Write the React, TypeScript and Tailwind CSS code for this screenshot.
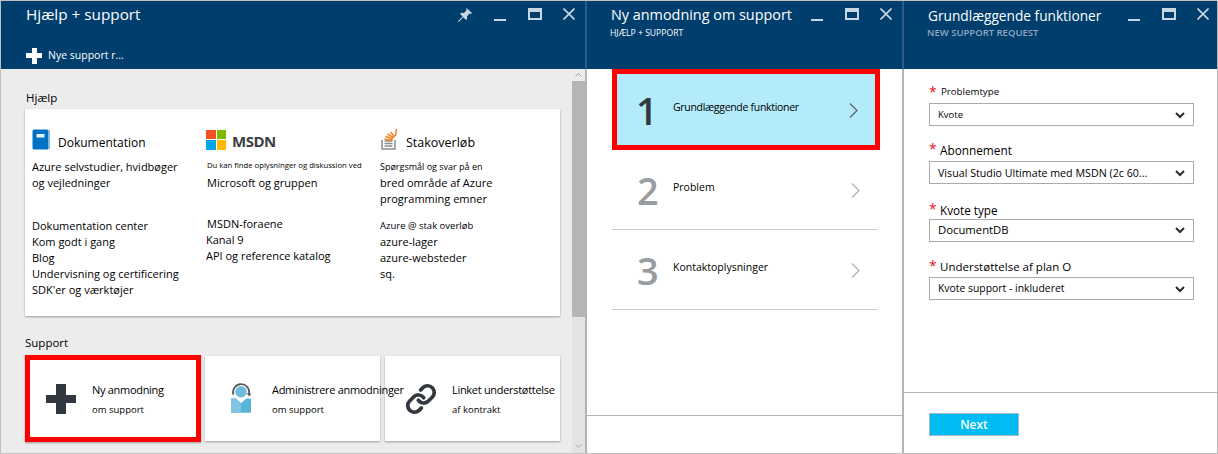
import type { ReactNode } from 'react';

function PinIcon() {
    return (
        <svg width="14" height="14" viewBox="0 0 14 14" className="text-[#c9d6e3]">
            <path fill="currentColor" d="M8.500 0L14 5l-1.300 1-1.100-.4-2.600 2.600.2 2.600L8 12 5.300 9.300.8 14 0 13.200l4.700-4.700-2.600-2.600 1.200-1.200 2.600.2 2.700-2.600-.4-1.100z" />
        </svg>
    );
}

function WindowButtons({ pin }: { pin?: boolean }) {
    return (
        <div className="flex shrink-0 items-start text-[#c9d6e3]">
            {pin && (
                <div className="mr-[22px] mt-[7px]">
                    <PinIcon />
                </div>
            )}
            <div className="mt-[18px] h-[2px] w-[12px] bg-[#c9d6e3]" />
            <div className="ml-[22px] mt-[7px] h-[12px] w-[14px] border-[2px] border-t-[4px] border-[#c9d6e3]" />
            <svg width="12" height="12" viewBox="0 0 12 12" className="ml-[21px] mt-[7px]">
                <path d="M.5.500l11 11M11.500.500l-11 11" stroke="currentColor" strokeWidth="1.600" fill="none" />
            </svg>
        </div>
    );
}

function BookIcon() {
    return (
        <svg width="19" height="21" viewBox="0 0 19 21">
            <rect x="0.500" y="0.500" width="16" height="20" rx="1.500" fill="#0072c6" />
            <rect x="16" y="1" width="2" height="19" fill="#7fb9e3" />
            <rect x="4.500" y="5" width="8" height="3.500" fill="#e6f2fb" />
        </svg>
    );
}

function MsLogo() {
    return (
        <div className="grid h-[20px] w-[20px] grid-cols-2 gap-px">
            <div className="bg-[#f25022]" />
            <div className="bg-[#7fba00]" />
            <div className="bg-[#00a4ef]" />
            <div className="bg-[#ffb900]" />
        </div>
    );
}

function StackIcon() {
    return (
        <svg width="17" height="21" viewBox="0 0 17 21">
            <path d="M1 11v9h13v-9" fill="none" stroke="#8c8c8c" strokeWidth="1.500" />
            <path d="M3.500 12h8M3.500 14.500h8M3.500 17h8" stroke="#8c8c8c" strokeWidth="1.500" />
            <path d="M3.500 10.300l8 .7M4.500 7.500l7.500 2.300M6.500 5l6.300 3.700M9.500 3l4.500 5M15.500 0l-1 7" stroke="#f48024" strokeWidth="1.500" fill="none" />
        </svg>
    );
}

function PersonIcon() {
    return (
        <svg width="20" height="30" viewBox="0 0 21 31" className="mb-[2px]">
            <path d="M2.500 12A8.500 8.500 0 1 1 19 11" fill="none" stroke="#5a5a5a" strokeWidth="1.800" />
            <path d="M16.500 10.500h5L19 14z" fill="#5a5a5a" />
            <circle cx="10.500" cy="9" r="6" fill="#6cbbdd" />
            <path d="M0 16h5L10.500 21 16 16h5v15H0z" fill="#59b4d9" />
            <path d="M0 16h5L10.500 21v10H0z" fill="#7fc4e2" />
        </svg>
    );
}

function LinkIcon() {
    return (
        <svg width="32" height="32" viewBox="0 0 24 24" fill="none" stroke="#32383f" strokeWidth="2.800" strokeLinecap="round" strokeLinejoin="round">
            <path d="M10 13a5 5 0 0 0 7.540.540l3-3a5 5 0 0 0-7.070-7.070l-1.720 1.710" />
            <path d="M14 11a5 5 0 0 0-7.540-.540l-3 3a5 5 0 0 0 7.070 7.070l1.710-1.710" />
        </svg>
    );
}

function Chevron({ dark }: { dark?: boolean }) {
    return (
        <svg width="9" height="15" viewBox="0 0 9 15" className={dark ? 'text-[#5a6066]' : 'text-[#b0b0b0]'}>
            <path d="M1 .5l7 7-7 7" fill="none" stroke="currentColor" strokeWidth="1.200" />
        </svg>
    );
}

function HelpColumn({ width, title, lines, links }: { width: string; title: ReactNode; lines: ReactNode; links: ReactNode }) {
    return (
        <div className={width}>
            <div className="flex h-[23px] items-center">{title}</div>
            <div className="mt-[8px] h-[59px] text-[11px] leading-[16px]">{lines}</div>
            <div className="text-[11px] leading-[16px]">{links}</div>
        </div>
    );
}

function SupportCard({ icon, title, sub, active }: { icon: ReactNode; title: string; sub: string; active?: boolean }) {
    return (
        <div className={active ? '-mt-[1px] -mr-[1px] flex h-[87px] w-[176px] items-center border-[5px] border-[#ff0000] bg-white shadow-[0_1px_2px_rgba(0,0,0,0.35)]' : 'flex h-[85px] w-[175px] items-center bg-white px-[5px] shadow-[0_1px_2px_rgba(0,0,0,0.35)]'}>
            <div className="flex w-[62px] shrink-0 justify-center">{icon}</div>
            <div className="relative z-10 mt-[3px] whitespace-nowrap">
                <div className="text-[11px] leading-[16px] tracking-[-0.3px]">{title}</div>
                <div className="mt-[4px] text-[9.500px] leading-[16px]">{sub}</div>
            </div>
        </div>
    );
}

function Step({ n, label, active }: { n: string; label: string; active?: boolean }) {
    return (
        <div className={active ? 'ml-[25px] flex h-[81px] w-[268px] items-center border-[5px] border-[#ff0000] bg-[#b3ebfa]' : 'ml-[25px] flex h-[80px] w-[265px] items-center border-b border-[#c8c8c8]'}>
            <div className={active ? 'w-[56px] pl-[19px] text-[38px] font-semibold leading-none text-[#32383f]' : 'w-[61px] pl-[25px] text-[38px] font-semibold leading-none text-[#9a9da0]'}>{n}</div>
            <div className={active ? 'mb-[4px] flex-1 text-[10.500px] tracking-[-0.3px] text-black' : 'mb-[4px] flex-1 text-[10.500px] text-black'}>{label}</div>
            <div className="mr-[17px] mt-[2px]">
                <Chevron dark={active} />
            </div>
        </div>
    );
}

function SelectField({ label, value, className, labelClass, boxClass }: { label: string; value: string; className: string; labelClass: string; boxClass: string }) {
    return (
        <div className={className}>
            <div className="flex items-start">
                <span className="w-[11px] text-[14px] leading-[14px] text-[#e81123]">*</span>
                <span className={labelClass}>{label}</span>
            </div>
            <div className={boxClass}>
                <span>{value}</span>
                <svg width="10" height="7" viewBox="0 0 10 7">
                    <path d="M1 1l4 4 4-4" fill="none" stroke="#2b2b2b" strokeWidth="2" />
                </svg>
            </div>
        </div>
    );
}

export default function App() {
    return (
        <div className="flex h-[454px] w-[1218px] overflow-hidden border-y border-l border-[#c0c0c0] bg-white font-['Open_Sans','Liberation_Sans',sans-serif] text-black">
            {/* Help + support blade */}
            <div className="flex w-[584px] shrink-0 flex-col">
                <div className="h-[68px] shrink-0 bg-[#003e6e] pl-[25px] pr-[10px] text-white">
                    <div className="flex justify-between">
                        <div className="mt-[2px] text-[15.300px] leading-[22px]">Hjælp + support</div>
                        <WindowButtons pin />
                    </div>
                    <div className="mt-[23px] flex items-center">
                        <div className="relative h-[16px] w-[16px]">
                            <div className="absolute left-[6px] top-0 h-[16px] w-[5px] bg-white" />
                            <div className="absolute left-0 top-[5px] h-[5px] w-[16px] bg-white" />
                        </div>
                        <div className="ml-[6px] text-[10.500px]">Nye support r...</div>
                    </div>
                </div>
                <div className="flex min-h-0 flex-1 bg-[#ececec]">
                    <div className="flex-1 pl-[24px]">
                        <div className="ml-[1px] mt-[21px] text-[11.500px] leading-[16px]">Hjælp</div>
                        <div className="mt-[3px] flex h-[207px] w-[535px] bg-white pl-[7px] pt-[19px] shadow-[0_1px_2px_rgba(0,0,0,0.35)]">
                            <HelpColumn
                                width="w-[174px]"
                                title={<div className="flex items-center gap-[7px]"><BookIcon /><span className="mt-[7px] text-[12px]">Dokumentation</span></div>}
                                lines={<><div>Azure selvstudier, hvidbøger</div><div>og vejledninger</div></>}
                                links={<><div>Dokumentation center</div><div>Kom godt i gang</div><div>Blog</div><div>Undervisning og certificering</div><div>SDK'er og værktøjer</div></>}
                            />
                            <HelpColumn
                                width="w-[174px]"
                                title={<div className="flex items-center gap-[6px]"><MsLogo /><span className="mt-[3px] text-[15px] font-bold tracking-[-0.5px] text-[#3b3e45]">MSDN</span></div>}
                                lines={<><div className="mb-[2px] mt-[-2px] ml-[1px] text-[7.700px]">Du kan finde oplysninger og diskussion ved</div><div className="ml-[1px]">Microsoft og gruppen</div></>}
                                links={<><div className="ml-[1px]">MSDN-foraene</div><div>Kanal 9</div><div>API og reference katalog</div></>}
                            />
                            <HelpColumn
                                width="w-[170px]"
                                title={<div className="ml-[1px] flex items-center gap-[8px]"><StackIcon /><span className="mt-[7px] text-[12.500px]">Stakoverløb</span></div>}
                                lines={<><div className="text-[9px]">Spørgsmål og svar på en</div><div>bred område af Azure</div><div>programming emner</div></>}
                                links={<><div className="text-[9.500px]">Azure @ stak overløb</div><div>azure-lager</div><div>azure-websteder</div><div>sq.</div></>}
                            />
                        </div>
                        <div className="mt-[19px] text-[11.500px] leading-[16px]">Support</div>
                        <div className="mt-[5px] flex gap-[5px]">
                            <SupportCard
                                active
                                title="Ny anmodning"
                                sub="om support"
                                icon={
                                    <div className="relative h-[30px] w-[30px]">
                                        <div className="absolute left-[10px] top-0 h-[30px] w-[10px] bg-[#32383f]" />
                                        <div className="absolute left-0 top-[11px] h-[8px] w-[30px] bg-[#32383f]" />
                                    </div>
                                }
                            />
                            <SupportCard title="Administrere anmodninger" sub="om support" icon={<PersonIcon />} />
                            <SupportCard title="Linket understøttelse" sub="af kontrakt" icon={<LinkIcon />} />
                        </div>
                    </div>
                    {/* scrollbar */}
                    <div className="flex w-[13px] shrink-0 flex-col items-center bg-[#e3e3e3]">
                        <div className="flex h-[12px] w-full items-center justify-center bg-[#ececec]">
                            <svg width="7" height="4" viewBox="0 0 7 4"><path d="M.5 3.500l3-3 3 3" fill="none" stroke="#a6a6a6" /></svg>
                        </div>
                        <div className="h-[236px] w-full bg-[#b5b5b5]" />
                        <div className="mt-auto mb-[1px] flex h-[12px] w-full items-center justify-center">
                            <svg width="7" height="4" viewBox="0 0 7 4"><path d="M.5.500l3 3 3-3" fill="none" stroke="#a6a6a6" /></svg>
                        </div>
                    </div>
                </div>
            </div>
            <div className="w-[2px] shrink-0 bg-[linear-gradient(to_bottom,#2f5a86_68px,#b4b4b4_68px)]" />

            {/* New support request blade */}
            <div className="flex w-[315px] shrink-0 flex-col">
                <div className="flex h-[68px] shrink-0 justify-between bg-[#003e6e] pl-[24px] pr-[10px] text-white">
                    <div>
                        <div className="mt-[3px] whitespace-nowrap text-[14.400px] leading-[22px]">Ny anmodning om support</div>
                        <div className="ml-[-1px] mt-[1px] text-[8.600px] leading-[12px]">HJÆLP + SUPPORT</div>
                    </div>
                    <WindowButtons />
                </div>
                <div className="flex flex-1 flex-col">
                    <Step active n="1" label="Grundlæggende funktioner" />
                    <Step n="2" label="Problem" />
                    <Step n="3" label="Kontaktoplysninger" />
                    <div className="mt-auto h-[38px] border-t border-[#b4b4b4]" />
                </div>
            </div>
            <div className="w-[2px] shrink-0 bg-[linear-gradient(to_bottom,#2f5a86_68px,#b4b4b4_68px)]" />

            {/* Basics blade */}
            <div className="flex flex-1 flex-col border-r border-[#b4b4b4]">
                <div className="flex h-[68px] shrink-0 justify-between bg-[#003e6e] pl-[24px] pr-[8px] text-white">
                    <div>
                        <div className="mt-[4px] whitespace-nowrap text-[13.700px] leading-[22px]">Grundlæggende funktioner</div>
                        <div className="ml-[-1px] text-[9.500px] font-semibold leading-[12px] text-[#8fa8c0]">NEW SUPPORT REQUEST</div>
                    </div>
                    <WindowButtons />
                </div>
                <div className="flex flex-1 flex-col pl-[25px]">
                    <SelectField
                        label="Problemtype"
                        value="Kvote"
                        className="mt-[16px]"
                        labelClass="ml-[1px] text-[9.700px] leading-[14px]"
                        boxClass="mt-[4px] flex h-[23px] w-[265px] items-center justify-between border border-[#ababab] pl-[8px] pr-[8px] pt-[1px] text-[9.500px]"
                    />
                    <SelectField
                        label="Abonnement"
                        value="Visual Studio Ultimate med MSDN (2c 60..."
                        className="mt-[16px]"
                        labelClass="text-[11.800px] leading-[16px]"
                        boxClass="mt-[3px] flex h-[23px] w-[265px] items-center justify-between border border-[#ababab] pl-[8px] pr-[8px] pt-[1px] text-[10.700px]"
                    />
                    <SelectField
                        label="Kvote type"
                        value="DocumentDB"
                        className="mt-[18px]"
                        labelClass="text-[11.700px] leading-[16px]"
                        boxClass="mt-[1px] flex h-[23px] w-[265px] items-center justify-between border border-[#ababab] pl-[8px] pr-[8px] text-[11.300px]"
                    />
                    <SelectField
                        label="Understøttelse af plan O"
                        value="Kvote support - inkluderet"
                        className="mt-[17px]"
                        labelClass="text-[11.500px] leading-[16px]"
                        boxClass="mt-[2px] flex h-[23px] w-[265px] items-center justify-between border border-[#ababab] pl-[8px] pr-[8px] pt-[1px] text-[10.400px]"
                    />
                    <div className="-ml-[25px] mt-auto h-[61px] border-t border-[#b4b4b4] pl-[25px] pt-[20px]">
                        <div className="flex h-[23px] w-[90px] items-center justify-center border border-[#a8b8c0] bg-[#00bcf2] text-[12px] font-semibold text-white">Next</div>
                    </div>
                </div>
            </div>
        </div>
    );
}
